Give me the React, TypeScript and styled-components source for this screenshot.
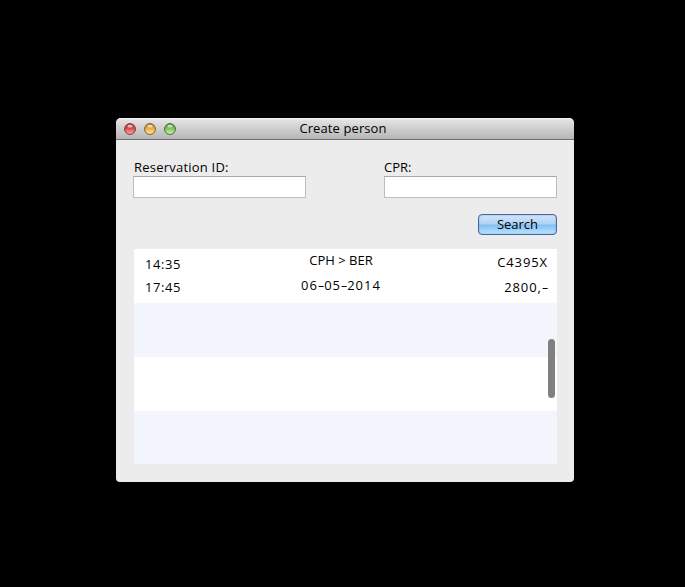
import React from "react";
import styled, { createGlobalStyle } from "styled-components";

const GlobalStyle = createGlobalStyle`
  * { box-sizing: border-box; }
  html, body { margin: 0; background: #000; overflow: hidden; }
  body { font: 13px/18px "Open Sans", "Noto Sans", sans-serif; color: #000; }
`;

const Desktop = styled.main`
  width: 685px;
  height: 587px;
  padding: 118px 111px 105px 116px;
  background: #000;
`;

const Window = styled.section`
  width: 458px;
  height: 364px;
  border-radius: 5px 5px 4px 4px;
  overflow: hidden;
  background: #ececec;
`;

const TitleBar = styled.header`
  height: 22px;
  display: grid;
  grid-template-columns: 100px 1fr 112px;
  align-items: center;
  padding-left: 8px;
  border-bottom: 1px solid #707070;
  background: linear-gradient(#f4f4f4 0, #e2e2e2 2px, #b6b6b6 100%);
`;

const Controls = styled.div`
  display: flex;
  gap: 8px;
`;

const Light = styled.svg`
  display: block;
  width: 12px;
  height: 12px;
`;

const Label = styled.span<{ $tracking?: number }>`
  display: block;
  height: 18px;
  line-height: 16px;
  white-space: nowrap;
  letter-spacing: ${(p) => p.$tracking ?? 0}px;
`;

const Dash = styled.span`
  display: inline-block;
  margin: 0 1px;
  letter-spacing: 0;
  transform: scaleX(1.6);
`;

const Title = styled(Label)`
  text-align: center;
`;

const Content = styled.div`
  padding: 19px 17px 18px;
`;

const Fields = styled.div`
  display: flex;
  justify-content: space-between;
`;

const Field = styled.label`
  width: 173px;
  display: block;
  & > span { padding-left: 1px; height: 17px; }
  &:last-child > span { padding-left: 0; }
`;

const Input = styled.input`
  display: block;
  width: 173px;
  height: 22px;
  padding: 0 5px;
  border: 1px solid #bdbdbd;
  border-top-color: #a9a9a9;
  border-radius: 0;
  outline: none;
  background: #fff;
  font: inherit;
`;

const Actions = styled.div`
  display: flex;
  justify-content: flex-end;
  margin-top: 16px;
`;

const Button = styled.button`
  width: 79px;
  height: 21px;
  padding: 0;
  border: 1px solid #4d659f;
  border-radius: 4px;
  background: linear-gradient(#d3e5f8 0, #afd2f5 48%, #83bdf2 52%, #b9e5ff 100%);
  box-shadow: inset 0 0 2px #78a6e0;
  color: #000;
  font: inherit;
  text-align: center;
`;

const Results = styled.div`
  display: grid;
  grid-template-rows: 54px 54px 54px 53px;
  margin: 14px 0 0 1px;
  position: relative;
`;

const Row = styled.div`
  display: grid;
  grid-template-columns: 156px 80px 1fr;
  padding: 0 9px 0 11px;
  background: #fff;
  &:nth-child(even) { background: #f2f6fc; }
`;

const Cell = styled.div<{ $top: number; $gap: number; $align: string }>`
  display: flex;
  flex-direction: column;
  align-items: ${(p) => p.$align};
  padding-top: ${(p) => p.$top}px;
  gap: ${(p) => p.$gap}px;
`;

const ScrollThumb = styled.div`
  position: absolute;
  right: 2px;
  top: 90px;
  width: 7px;
  height: 59px;
  border-radius: 4px;
  background: #808080;
`;

const lights = [
  { id: "close", edge: "#7e3333", top: "#b83a3c", mid: "#df5053", low: "#ffb6b0" },
  { id: "minimize", edge: "#86592a", top: "#bd8334", mid: "#eeb34c", low: "#fff3a0" },
  { id: "zoom", edge: "#406d32", top: "#55983e", mid: "#86c568", low: "#d8ffad" },
];

export default function App() {
  return (
    <>
      <GlobalStyle />
      <Desktop>
        <Window>
          <TitleBar>
            <Controls>
              {lights.map((l) => (
                <Light key={l.id} viewBox="0 0 12 12">
                  <defs>
                    <linearGradient id={l.id} x2="0" y2="1">
                      <stop stopColor={l.top} />
                      <stop offset=".5" stopColor={l.mid} />
                      <stop offset="1" stopColor={l.low} />
                    </linearGradient>
                  </defs>
                  <circle cx="6" cy="6" r="5.4" fill={`url(#${l.id})`} stroke={l.edge} strokeWidth="1" />
                  <ellipse cx="6" cy="3.2" rx="2.5" ry="1.4" fill="#fff" opacity=".6" />
                </Light>
              ))}
            </Controls>
            <Title $tracking={0.1}>Create person</Title>
          </TitleBar>
          <Content>
            <Fields>
              <Field>
                <Label $tracking={0.22}>Reservation ID:</Label>
                <Input />
              </Field>
              <Field>
                <Label>CPR:</Label>
                <Input />
              </Field>
            </Fields>
            <Actions>
              <Button type="button"><Label>Search</Label></Button>
            </Actions>
            <Results>
              <Row>
                <Cell $top={7} $gap={5} $align="flex-start">
                  <Label $tracking={0.6}>14:35</Label>
                  <Label $tracking={0.6}>17:45</Label>
                </Cell>
                <Cell $top={3} $gap={7} $align="center">
                  <Label>CPH &gt; BER</Label>
                  <Label $tracking={1}>06<Dash>-</Dash>05<Dash>-</Dash>2014</Label>
                </Cell>
                <Cell $top={5} $gap={7} $align="flex-end">
                  <Label $tracking={0.9}>C4395X</Label>
                  <Label $tracking={0.9}>2800,<Dash>-</Dash></Label>
                </Cell>
              </Row>
              <Row />
              <Row />
              <Row />
              <ScrollThumb />
            </Results>
          </Content>
        </Window>
      </Desktop>
    </>
  );
}
